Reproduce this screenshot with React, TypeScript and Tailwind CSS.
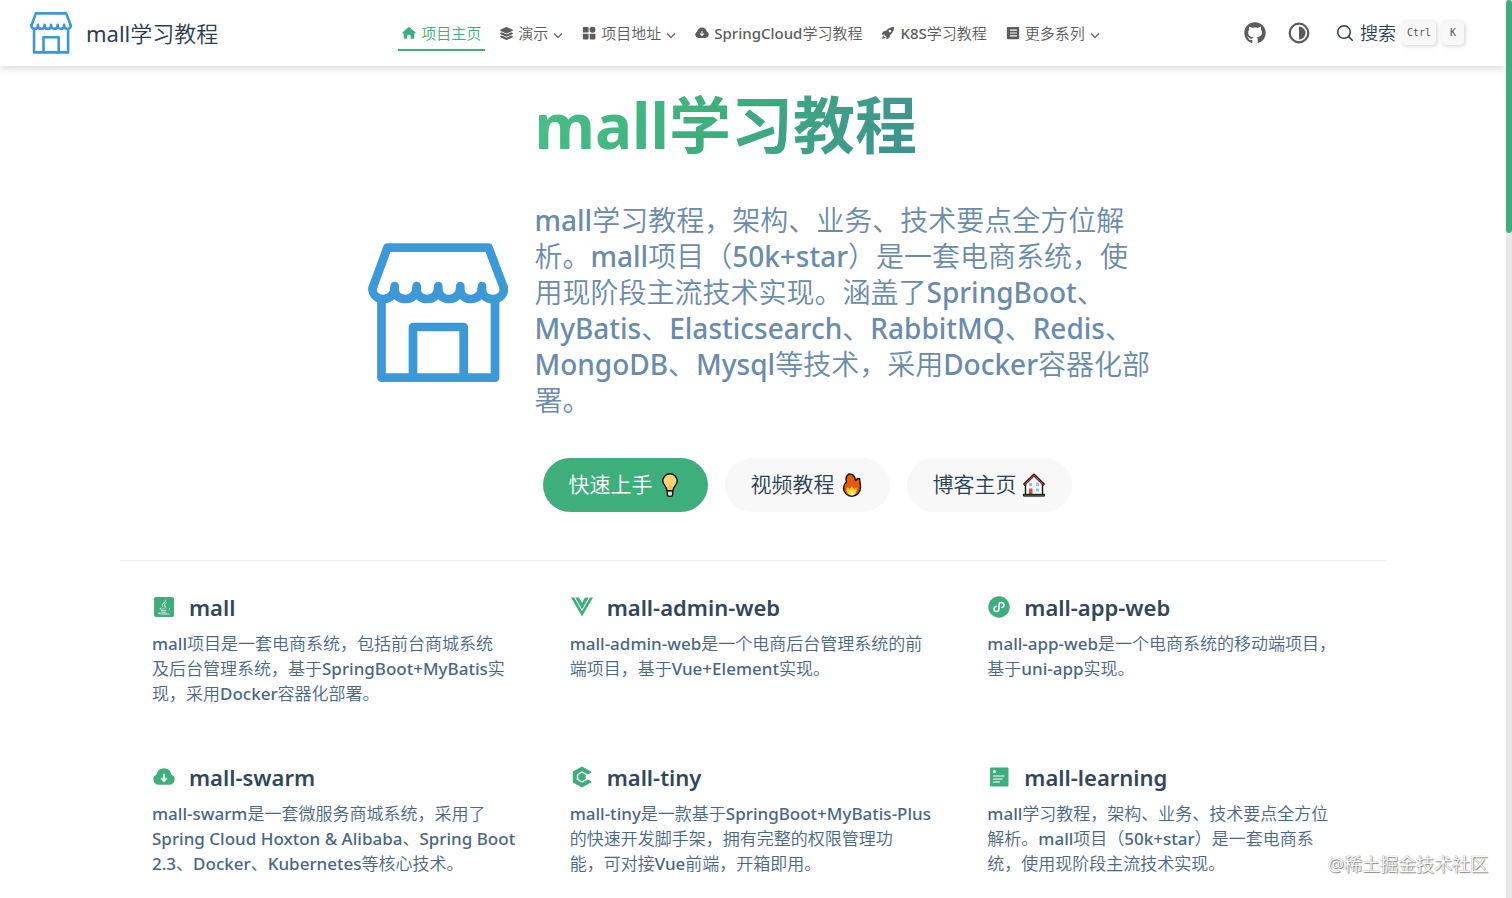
import type { ReactNode } from 'react';
import { FaGithub, FaJava, FaLayerGroup } from 'react-icons/fa';
import { IoRocketSharp } from 'react-icons/io5';

interface IconProps {
  className?: string;
}

interface NavItem {
  label: string;
  icon: ReactNode;
  active?: boolean;
  dropdown?: boolean;
}

interface Feature {
  title: string;
  details: string;
  icon: ReactNode;
}

function ShopLogo({ className }: IconProps) {
  return (
    <svg
      viewBox="0 0 140 140"
      className={className}
      fill="none"
      stroke="#3c99d8"
      strokeWidth="8.7"
      strokeLinejoin="round"
      strokeLinecap="round"
    >
      <path d="M5 44 19.5 4.6H120.500L135.500 44" />
      <path d="M5 44C3 50 8 56 15.500 56S26.700 51 26.700 43V47C27 52 31 56 37.700 56S48.700 52 48.700 43V47C49 52 53 56 59.500 56S70.300 52 70.300 43V47C71 52 75 56 81.300 56S92.300 52 92.300 43V47C93 52 97 56 103 56S114 52 114 43V47C114 52 118 56 125 56S137 51 135.500 44" />
      <path d="M13.500 58V134.700H127V58" />
      <path d="M45 134V84H95.700V134" />
    </svg>
  );
}

function HomeIcon({ className }: IconProps) {
  return (
    <svg viewBox="0 0 16 16" className={className} fill="currentColor">
      <path d="M7.300 1.300a1 1 0 0 1 1.400 0l6.600 5.800c.6.600.3 1.400-.5 1.400H14v5a1 1 0 0 1-1 1h-3v-3.700a.8.8 0 0 0-.8-.8H6.800a.8.8 0 0 0-.8.8v3.700H3a1 1 0 0 1-1-1v-5h-.8c-.8 0-1.100-.8-.5-1.400z" />
    </svg>
  );
}

function BlocksIcon({ className }: IconProps) {
  return (
    <svg viewBox="0 0 16 16" className={className} fill="currentColor">
      <rect x="1" y="1" width="6.500" height="6.500" rx="1" />
      <circle cx="12" cy="4.300" r="3.400" />
      <rect x="1" y="8.800" width="6.500" height="6.500" rx="1" />
      <rect x="8.800" y="8.800" width="6.500" height="6.500" rx="1" />
    </svg>
  );
}

function CloudIcon({ className }: IconProps) {
  return (
    <svg viewBox="0 0 24 24" className={className}>
      <path
        d="M6 20.500a5.700 5.700 0 0 1-2.200-10.900C4.500 5.500 7.600 2.500 12 2.500s7.500 3 8.200 7.100A5.700 5.700 0 0 1 18 20.500z"
        fill="currentColor"
      />
      <path
        d="M12 8.500V16M8.800 13.200 12 16.400l3.200-3.200"
        fill="none"
        stroke="white"
        strokeWidth="1.800"
      />
    </svg>
  );
}

function BookIcon({ className }: IconProps) {
  return (
    <svg viewBox="0 0 16 16" className={className}>
      <rect x="1" y="1" width="14" height="14" rx="1" fill="currentColor" />
      <path
        d="M4.500 4.700h8M4.500 8h8M4.500 11.300h8"
        fill="none"
        stroke="white"
        strokeWidth="1.200"
      />
    </svg>
  );
}

function ChevronIcon({ className }: IconProps) {
  return (
    <svg
      viewBox="0 0 10 10"
      className={className}
      fill="none"
      stroke="currentColor"
      strokeWidth="1.100"
    >
      <path d="M1 3.500 5 7.500 9 3.500" />
    </svg>
  );
}

function ContrastIcon({ className }: IconProps) {
  return (
    <svg viewBox="0 0 22 22" className={className}>
      <circle
        cx="11"
        cy="11"
        r="9.300"
        fill="none"
        stroke="currentColor"
        strokeWidth="2.200"
      />
      <path d="M11 4.500a6.500 6.500 0 0 1 0 13z" fill="currentColor" />
    </svg>
  );
}

function SearchIcon({ className }: IconProps) {
  return (
    <svg
      viewBox="0 0 18 18"
      className={className}
      fill="none"
      stroke="currentColor"
      strokeWidth="1.500"
      strokeLinecap="round"
    >
      <circle cx="8" cy="8" r="6.300" />
      <path d="M12.600 12.600 16.300 16.300" />
    </svg>
  );
}

function JavaIcon() {
  return (
    <span className="flex h-5 w-5 items-center justify-center rounded-xs bg-[#3eaf7c]">
      <FaJava className="h-4 w-4 text-white" />
    </span>
  );
}

function VueIcon() {
  return (
    <svg viewBox="0 0 22 20" className="h-5 w-[22px]" fill="currentColor">
      <path d="M0 .5h3.200L11 14.200 18.800.5H22L11 19.500z" />
      <path d="M4.300.5H8L11 5.800 14 .5h3.700L11 12.400z" />
    </svg>
  );
}

function MiniProgramIcon() {
  return (
    <svg viewBox="0 0 22 22" className="h-[22px] w-[22px]">
      <circle cx="11" cy="11" r="10.700" fill="currentColor" />
      <path
        d="M8.200 10.600a2.500 2.500 0 1 0 2.800 2.500V8.900a2.500 2.500 0 1 1 2.800 2.500"
        fill="none"
        stroke="white"
        strokeWidth="1.500"
        strokeLinecap="round"
      />
    </svg>
  );
}

function HexIcon() {
  return (
    <svg viewBox="0 0 20 22" className="h-[22px] w-5">
      <path
        d="M10 .5 19 5.400V7L15.500 8.500 10 5.200 4.800 8.200V13.800L10 16.800 15.500 13.500 19 15V16.600L10 21.500.8 16.400V5.600z"
        fill="currentColor"
      />
      <path
        d="M10 6.800 13.700 8.900V13.100L10 15.200 6.300 13.100V8.900z"
        fill="currentColor"
      />
    </svg>
  );
}

function NoteIcon() {
  return (
    <svg viewBox="0 0 20 20" className="h-5 w-5">
      <rect x="1" y=".5" width="18.500" height="19" rx="1" fill="currentColor" />
      <circle cx="5.400" cy="4.600" r="1.500" fill="white" />
      <path
        d="M4 9h11.500M4 12h9.500M4 15h7"
        fill="none"
        stroke="white"
        strokeWidth="1.200"
      />
    </svg>
  );
}

function BulbEmoji() {
  return (
    <svg
      viewBox="0 0 24 24"
      className="h-6 w-6"
      stroke="#111"
      strokeWidth="1.400"
      strokeLinejoin="round"
    >
      <path d="M9.300 17.500h5.400v3.700c0 1.300-1 2.200-2.700 2.200s-2.700-.9-2.700-2.200z" fill="#d9dee4" />
      <path
        d="M12 .8a7.200 7.200 0 0 0-7.200 7.200c0 4 4 5.300 4.300 9.700h5.800c.3-4.400 4.300-5.700 4.300-9.700A7.200 7.200 0 0 0 12 .8z"
        fill="#ffd37c"
      />
      <path d="M10 12.500h4L12.800 17h-1.600z" fill="#ffc02e" stroke="none" />
    </svg>
  );
}

function FireEmoji() {
  return (
    <svg viewBox="0 0 24 24" className="h-6 w-6">
      <path
        d="M9 .9c3.500-.3 6.500 2.600 6.500 6.600.9-.2 1.500-.9 1.700-1.800h2.500c-.4 2 .8 4.300.8 8.300 0 5.300-3.500 9.200-8.500 9.200S3.500 19.600 3.500 15c0-2.900 1.200-4.600 3-6.300-.9-2.700-.3-6 2.500-7.800z"
        fill="#e8590c"
        stroke="#111"
        strokeWidth="1.400"
        strokeLinejoin="round"
      />
      <path
        d="M7 14.500c1 0 2 1 2.500 2 1-1.200 1.800-2.200 2.200-3.200 1.300 1 2 2.200 2.300 3.500.8-.7 1.500-1.500 2.200-2.500 1.300 4-.2 8.200-4.200 8.200S5.700 18.500 7 14.500z"
        fill="#ffd43b"
      />
      <path d="M12 18c1.500 1.200 2 4.300 0 4.300S10.500 19.500 12 18z" fill="#fff3bf" />
    </svg>
  );
}

function HouseEmoji() {
  return (
    <svg viewBox="0 0 24 24" className="h-6 w-6" strokeLinejoin="round">
      <path
        d="M3.500 10.500 12 2.500 20.500 10.500V22h-17z"
        fill="white"
        stroke="#111"
        strokeWidth="1.400"
      />
      <path d="M1.800 12 12 1.800 22.200 12" fill="none" stroke="#111" strokeWidth="2.600" />
      <path d="M2.500 11.800 12 2.400 21.500 11.800" fill="none" stroke="#d9382c" strokeWidth="1.200" />
      <path d="M7 10h3v3H7zM14 10h3v3h-3zM14 15.500h3v3h-3z" fill="#7cc7f5" />
      <path d="M7 15.500h3.500V22H7z" fill="#e04a3a" />
      <path d="M1.500 21.300h21v1.800h-21z" fill="#2f9e44" stroke="#111" strokeWidth="1" />
    </svg>
  );
}

const navItems: NavItem[] = [
  { label: '项目主页', icon: <HomeIcon className="h-[14px] w-[14px]" />, active: true },
  { label: '演示', icon: <FaLayerGroup className="h-[13px] w-[13px]" />, dropdown: true },
  { label: '项目地址', icon: <BlocksIcon className="h-[14px] w-[14px]" />, dropdown: true },
  { label: 'SpringCloud学习教程', icon: <CloudIcon className="h-[14px] w-[14px]" /> },
  { label: 'K8S学习教程', icon: <IoRocketSharp className="h-[14px] w-[14px]" /> },
  { label: '更多系列', icon: <BookIcon className="h-[14px] w-[14px]" />, dropdown: true },
];

const tagline =
  'mall学习教程，架构、业务、技术要点全方位解\n析。mall项目（50k+star）是一套电商系统，使\n用现阶段主流技术实现。涵盖了SpringBoot、\nMyBatis、Elasticsearch、RabbitMQ、Redis、\nMongoDB、Mysql等技术，采用Docker容器化部\n署。';

const features: Feature[] = [
  {
    title: 'mall',
    details:
      'mall项目是一套电商系统，包括前台商城系统\n及后台管理系统，基于SpringBoot+MyBatis实\n现，采用Docker容器化部署。',
    icon: <JavaIcon />,
  },
  {
    title: 'mall-admin-web',
    details: 'mall-admin-web是一个电商后台管理系统的前\n端项目，基于Vue+Element实现。',
    icon: <VueIcon />,
  },
  {
    title: 'mall-app-web',
    details: 'mall-app-web是一个电商系统的移动端项目，\n基于uni-app实现。',
    icon: <MiniProgramIcon />,
  },
  {
    title: 'mall-swarm',
    details:
      'mall-swarm是一套微服务商城系统，采用了\nSpring Cloud Hoxton & Alibaba、Spring Boot\n2.3、Docker、Kubernetes等核心技术。',
    icon: <CloudIcon className="h-[22px] w-[22px]" />,
  },
  {
    title: 'mall-tiny',
    details:
      'mall-tiny是一款基于SpringBoot+MyBatis-Plus\n的快速开发脚手架，拥有完整的权限管理功\n能，可对接Vue前端，开箱即用。',
    icon: <HexIcon />,
  },
  {
    title: 'mall-learning',
    details:
      'mall学习教程，架构、业务、技术要点全方位\n解析。mall项目（50k+star）是一套电商系\n统，使用现阶段主流技术实现。',
    icon: <NoteIcon />,
  },
];

function Navbar() {
  return (
    <header className="flex h-[66px] items-center pr-[34px] pl-[30px] shadow-[0_2px_8px_rgba(0,0,0,0.16)]">
      <div className="flex flex-1 items-center">
        <a href="#" className="flex items-center gap-[14px] text-[22px] text-[#2c3e50]">
          <ShopLogo className="h-[42px] w-[42px]" />
          <span>mall学习教程</span>
        </a>
      </div>
      <nav className="flex items-center gap-[11px] text-[15px] font-medium whitespace-nowrap text-[#5c5c5c]">
        {navItems.map((item) =>
          item.dropdown ? (
            <button key={item.label} className="flex h-9 items-center gap-[5px] px-1">
              {item.icon}
              {item.label}
              <ChevronIcon className="mt-1 h-[10px] w-[10px]" />
            </button>
          ) : (
            <a
              key={item.label}
              href="#"
              className={
                item.active
                  ? 'flex h-9 items-center gap-[5px] border-y-2 border-t-transparent border-b-[#3eaf7c] px-1 text-[#3eaf7c]'
                  : 'flex h-9 items-center gap-[5px] px-1'
              }
            >
              {item.icon}
              {item.label}
            </a>
          ),
        )}
      </nav>
      <div className="flex flex-1 items-center justify-end text-[#5c5c5c]">
        <a href="#" aria-label="GitHub">
          <FaGithub className="h-[22px] w-[22px]" />
        </a>
        <button aria-label="外观" className="ml-[22px]">
          <ContrastIcon className="h-[22px] w-[22px]" />
        </button>
        <button className="mr-2 ml-[26px] flex items-center text-lg text-[#2c3e50]">
          <SearchIcon className="mr-[6px] h-[18px] w-[18px]" />
          搜索
          <kbd className="ml-[6px] rounded bg-[#f8f8f8] px-[5px] font-['DejaVu_Sans_Mono',monospace] text-[10px] leading-6 text-[#555] shadow-[1px_1px_4px_rgba(0,0,0,0.18)]">
            Ctrl
          </kbd>
          <kbd className="ml-[6px] rounded bg-[#f8f8f8] px-2 font-['DejaVu_Sans_Mono',monospace] text-[10px] leading-6 text-[#555] shadow-[1px_1px_4px_rgba(0,0,0,0.18)]">
            K
          </kbd>
        </button>
      </div>
    </header>
  );
}

function Hero() {
  return (
    <section className="flex items-center justify-center gap-[27px] pt-5 pl-4">
      <ShopLogo className="mt-7 h-[140px] w-[140px] shrink-0" />
      <div className="w-[620px]">
        <h1 className="bg-[linear-gradient(120deg,#4abf8a,#3eaf7c_30%,#4070a8)] bg-clip-text font-['Noto_Sans','Noto_Sans_CJK_SC',sans-serif] text-[62px] leading-[78px] font-bold text-transparent">
          mall学习教程
        </h1>
        <p className="mt-[38px] text-[28px] leading-9 font-medium whitespace-pre-line text-[#6a8bad]">
          {tagline}
        </p>
        <div className="mt-10 flex gap-[17px] pl-2 text-[21px] text-[#2c3e50]">
          <a
            href="#"
            className="flex h-[54px] items-center gap-[5px] rounded-full bg-[#3eaf7c] px-[26px] text-white"
          >
            快速上手
            <BulbEmoji />
          </a>
          <a
            href="#"
            className="flex h-[54px] items-center gap-[5px] rounded-full bg-[#f8f8f8] px-[26px]"
          >
            视频教程
            <FireEmoji />
          </a>
          <a
            href="#"
            className="flex h-[54px] items-center gap-[5px] rounded-full bg-[#f8f8f8] px-[26px]"
          >
            博客主页
            <HouseEmoji />
          </a>
        </div>
      </div>
    </section>
  );
}

function FeatureCard({ title, details, icon }: Feature) {
  return (
    <article>
      <h2 className="flex h-8 items-center text-[22px] font-semibold text-[#32475b]">
        <span className="mr-[13px] flex w-6 justify-center text-[#3eaf7c]">{icon}</span>
        {title}
      </h2>
      <p className="mt-2 text-[17px] leading-[25px] font-medium whitespace-pre-line text-[#4a6785]">
        {details}
      </p>
    </article>
  );
}

function App() {
  return (
    <div className="flex h-screen bg-white font-['Noto_Sans','Noto_Sans_CJK_SC_DemiLight','Noto_Sans_CJK_SC',sans-serif]">
      <div className="flex min-w-0 flex-1 flex-col overflow-hidden">
        <Navbar />
        <main>
          <Hero />
          <section className="mx-[120px] mt-12 grid grid-cols-3 gap-x-[51px] gap-y-[55px] border-t border-[#eaecef] px-8 pt-[30px]">
            {features.map((feature) => (
              <FeatureCard key={feature.title} {...feature} />
            ))}
          </section>
        </main>
      </div>
      <div className="w-[6px] bg-[#e9e9e9]">
        <div className="h-[26%] rounded-full bg-[#3eaf7c]" />
      </div>
      <div className="absolute right-6 bottom-[22px] text-lg leading-6 text-white [text-shadow:0_0_1px_#777,1px_1px_1px_#888]">
        @稀土掘金技术社区
      </div>
    </div>
  );
}

export default App;
